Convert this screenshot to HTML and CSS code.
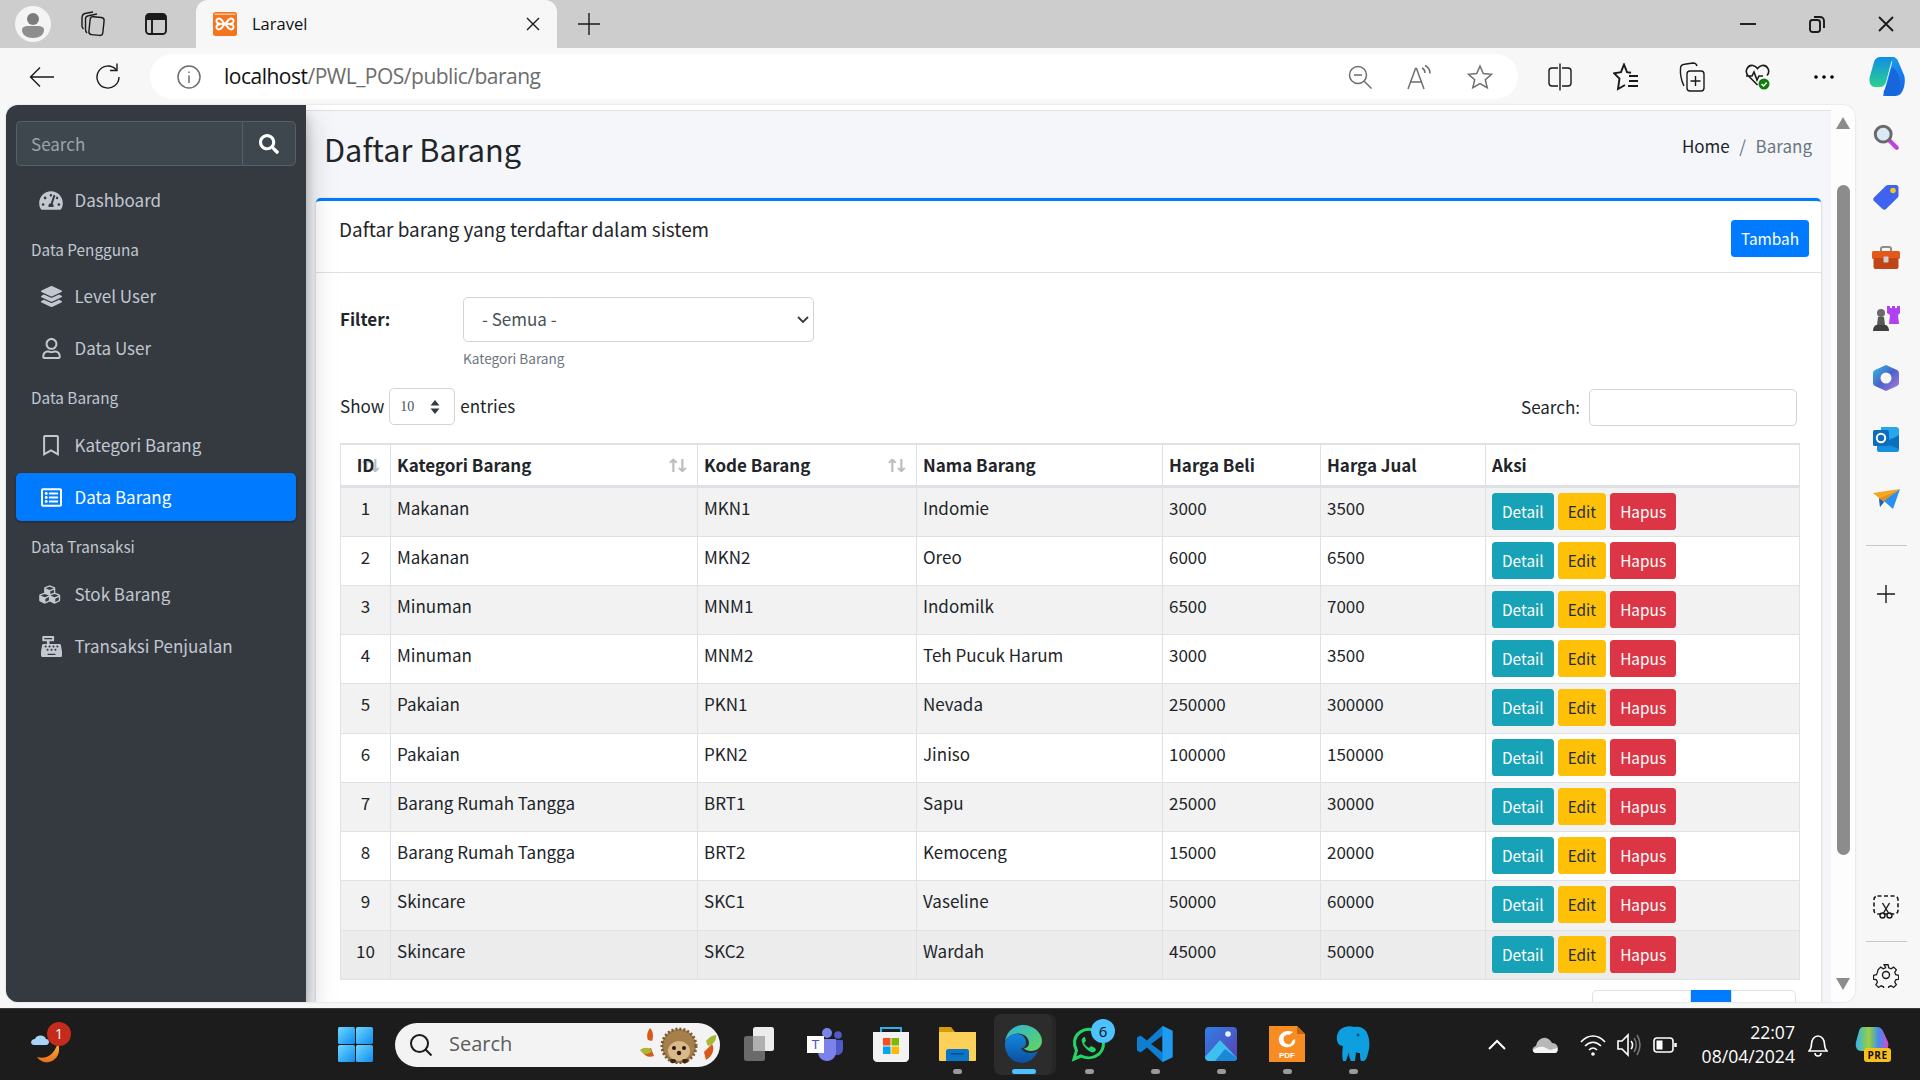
FILE: index.html
```html
<!DOCTYPE html>
<html lang="id">
<head>
<meta charset="utf-8">
<title>Laravel</title>
<link rel="stylesheet" href="styles.css">
</head>
<body>
<svg class="defs" width="0" height="0" aria-hidden="true">
  <defs>
    <symbol id="fa-search" viewBox="0 0 512 512"><path d="M505 442.7L405.3 343c-4.5-4.5-10.6-7-17-7H372c27.6-35.3 44-79.7 44-128C416 93.1 322.9 0 208 0S0 93.1 0 208s93.1 208 208 208c48.3 0 92.7-16.4 128-44v16.3c0 6.4 2.5 12.5 7 17l99.7 99.7c9.4 9.4 24.6 9.4 33.9 0l28.3-28.3c9.4-9.4 9.4-24.6.1-34zM208 336c-70.7 0-128-57.2-128-128 0-70.7 57.2-128 128-128 70.7 0 128 57.2 128 128 0 70.7-57.2 128-128 128z"/></symbol>
    <symbol id="fa-gauge" viewBox="0 0 576 512"><path d="M288 32C128.94 32 0 160.94 0 320c0 52.8 14.25 102.26 39.06 144.8 5.61 9.62 16.3 15.2 27.44 15.2h443c11.14 0 21.83-5.58 27.44-15.2C561.75 422.26 576 372.8 576 320c0-159.06-128.94-288-288-288zm0 64c14.71 0 26.58 10.13 30.32 23.65-1.11 2.26-2.64 4.23-3.45 6.67l-9.22 27.67c-5.13 3.49-10.97 6.01-17.64 6.01-17.67 0-32-14.33-32-32S270.33 96 288 96zM96 384c-17.67 0-32-14.33-32-32s14.33-32 32-32 32 14.33 32 32-14.33 32-32 32zm48-160c-17.67 0-32-14.33-32-32s14.33-32 32-32 32 14.33 32 32-14.33 32-32 32zm246.77-72.41l-61.33 184C343.13 347.33 352 364.54 352 384c0 11.72-3.38 22.55-8.88 32H232.88c-5.5-9.45-8.88-20.28-8.88-32 0-33.94 26.5-61.43 59.9-63.59l61.34-184.01c4.17-12.56 17.73-19.45 30.36-15.17 12.57 4.19 19.35 17.79 15.17 30.36zm14.66 57.2l15.52-46.55c3.47-1.29 7.13-2.23 11.05-2.23 17.67 0 32 14.33 32 32s-14.33 32-32 32c-11.38-.01-20.89-6.28-26.57-15.22zM480 384c-17.67 0-32-14.33-32-32s14.33-32 32-32 32 14.33 32 32-14.33 32-32 32z"/></symbol>
    <symbol id="fa-layers" viewBox="0 0 512 512"><path d="M12.41 148.02l232.94 105.67c6.8 3.09 14.49 3.09 21.29 0l232.94-105.67c16.55-7.51 16.55-32.52 0-40.03L266.65 2.31a25.607 25.607 0 0 0-21.29 0L12.41 107.98c-16.55 7.51-16.55 32.53 0 40.04zm487.18 88.28l-58.09-26.33-161.64 73.27c-7.56 3.43-15.59 5.17-23.86 5.17s-16.29-1.74-23.86-5.17L70.51 209.97l-58.1 26.33c-16.55 7.5-16.55 32.5 0 40l232.94 105.59c6.8 3.08 14.49 3.08 21.29 0L499.59 276.3c16.55-7.5 16.55-32.5 0-40zm0 127.8l-57.87-26.23-161.86 73.37c-7.56 3.43-15.59 5.17-23.86 5.17s-16.29-1.74-23.86-5.17L70.29 337.87 12.41 364.1c-16.55 7.5-16.55 32.5 0 40l232.94 105.59c6.8 3.08 14.49 3.08 21.29 0L499.59 404.1c16.55-7.5 16.55-32.5 0-40z"/></symbol>
    <symbol id="fa-user" viewBox="0 0 448 512"><path d="M313.6 304c-28.7 0-42.5 16-89.6 16-47.1 0-60.8-16-89.6-16C60.2 304 0 364.2 0 438.4V464c0 26.5 21.5 48 48 48h352c26.5 0 48-21.5 48-48v-25.6c0-74.2-60.2-134.4-134.4-134.4zM400 464H48v-25.6c0-47.6 38.8-86.4 86.4-86.4 14.6 0 38.3 16 89.6 16 51.7 0 74.9-16 89.6-16 47.6 0 86.4 38.8 86.4 86.4V464zM224 288c79.5 0 144-64.5 144-144S303.5 0 224 0 80 64.5 80 144s64.5 144 144 144zm0-240c52.9 0 96 43.1 96 96s-43.1 96-96 96-96-43.1-96-96 43.1-96 96-96z"/></symbol>
    <symbol id="fa-bookmark" viewBox="0 0 384 512"><path d="M336 0H48C21.49 0 0 21.49 0 48v464l192-112 192 112V48c0-26.51-21.49-48-48-48zm0 428.43l-144-84-144 84V54a6 6 0 0 1 6-6h276c3.31 0 6 2.69 6 5.99V428.43z"/></symbol>
    <symbol id="fa-list" viewBox="0 0 512 512"><path d="M464 32H48C21.49 32 0 53.49 0 80v352c0 26.51 21.49 48 48 48h416c26.51 0 48-21.49 48-48V80c0-26.51-21.49-48-48-48zm-6 400H54a6 6 0 0 1-6-6V86a6 6 0 0 1 6-6h404a6 6 0 0 1 6 6v340a6 6 0 0 1-6 6zm-42-92v24c0 6.627-5.373 12-12 12H204c-6.627 0-12-5.373-12-12v-24c0-6.627 5.373-12 12-12h200c6.627 0 12 5.373 12 12zm0-96v24c0 6.627-5.373 12-12 12H204c-6.627 0-12-5.373-12-12v-24c0-6.627 5.373-12 12-12h200c6.627 0 12 5.373 12 12zm0-96v24c0 6.627-5.373 12-12 12H204c-6.627 0-12-5.373-12-12v-24c0-6.627 5.373-12 12-12h200c6.627 0 12 5.373 12 12zm-252 12c0 19.882-16.118 36-36 36s-36-16.118-36-36 16.118-36 36-36 36 16.118 36 36zm0 96c0 19.882-16.118 36-36 36s-36-16.118-36-36 16.118-36 36-36 36 16.118 36 36zm0 96c0 19.882-16.118 36-36 36s-36-16.118-36-36 16.118-36 36-36 36 16.118 36 36z"/></symbol>
    <symbol id="fa-cubes" viewBox="0 0 576 512"><path d="M488.6 250.2L392 214V105.5c0-15-9.3-28.4-23.4-33.7l-100-37.5c-8.1-3.1-17.1-3.1-25.3 0l-100 37.5c-14.1 5.3-23.4 18.7-23.4 33.7V214l-96.6 36.2C9.3 255.5 0 268.9 0 283.9V394c0 13.6 7.7 26.1 19.9 32.2l100 50c10.1 5.1 22.1 5.1 32.2 0l103.9-52 103.9 52c10.1 5.1 22.1 5.1 32.2 0l100-50c12.2-6.1 19.9-18.6 19.9-32.2V283.9c0-15-9.3-28.4-23.4-33.7zM358 214.8l-85 31.9v-68.2l85-37v73.3zM154 104.1l102-38.2 102 38.2v.6l-102 41.4-102-41.4v-.6zm84 291.1l-85 42.5v-79.1l85-38.8v75.4zm0-112l-102 41.4-102-41.4v-.6l102-38.2 102 38.2v.6zm240 112l-85 42.5v-79.1l85-38.8v75.4zm0-112l-102 41.4-102-41.4v-.6l102-38.2 102 38.2v.6z"/></symbol>
    <symbol id="fa-register" viewBox="0 0 512 512"><path d="M511.1 378.8l-26.7-160c-2.6-15.4-15.9-26.7-31.6-26.7H208v-64h96c8.8 0 16-7.2 16-16V16c0-8.8-7.2-16-16-16H48c-8.8 0-16 7.2-16 16v96c0 8.8 7.2 16 16 16h96v64H59.1c-15.6 0-29 11.3-31.6 26.7L.8 378.7c-.6 3.5-.9 7-.9 10.5V480c0 17.7 14.3 32 32 32h448c17.7 0 32-14.3 32-32v-90.7c.1-3.5-.2-7-.8-10.5zM280 248c0-8.8 7.2-16 16-16h16c8.8 0 16 7.2 16 16v16c0 8.8-7.2 16-16 16h-16c-8.8 0-16-7.2-16-16v-16zm-32 64h16c8.8 0 16 7.2 16 16v16c0 8.8-7.2 16-16 16h-16c-8.8 0-16-7.2-16-16v-16c0-8.8 7.2-16 16-16zm-32-80c8.8 0 16 7.2 16 16v16c0 8.8-7.2 16-16 16h-16c-8.8 0-16-7.2-16-16v-16c0-8.8 7.2-16 16-16h16zM80 80V48h192v32H80zm40 200h-16c-8.8 0-16-7.2-16-16v-16c0-8.8 7.2-16 16-16h16c8.8 0 16 7.2 16 16v16c0 8.8-7.2 16-16 16zm16 64v-16c0-8.8 7.2-16 16-16h16c8.8 0 16 7.2 16 16v16c0 8.8-7.2 16-16 16h-16c-8.8 0-16-7.2-16-16zm216 112c0 4.4-3.6 8-8 8H168c-4.4 0-8-3.6-8-8v-16c0-4.4 3.6-8 8-8h176c4.4 0 8 3.6 8 8v16zm24-112c0 8.8-7.2 16-16 16h-16c-8.8 0-16-7.2-16-16v-16c0-8.8 7.2-16 16-16h16c8.8 0 16 7.2 16 16v16zm48-80c0 8.8-7.2 16-16 16h-16c-8.8 0-16-7.2-16-16v-16c0-8.8 7.2-16 16-16h16c8.8 0 16 7.2 16 16v16z"/></symbol>
    <linearGradient id="g-copilot" x1="0" y1="0" x2="1" y2="1"><stop offset="0" stop-color="#18b8d8"/><stop offset=".5" stop-color="#1a86f0"/><stop offset="1" stop-color="#1b5fe0"/></linearGradient>
    <linearGradient id="g-copilot2" x1="0" y1="0" x2="0" y2="1"><stop offset="0" stop-color="#0e8fe8"/><stop offset="1" stop-color="#2ed08c"/></linearGradient>
    <linearGradient id="g-win" x1="0" y1="0" x2="1" y2="1"><stop offset="0" stop-color="#6fd8ff"/><stop offset="1" stop-color="#0d8cf0"/></linearGradient>
    <linearGradient id="g-edge" x1="0" y1="0" x2="1" y2="1"><stop offset="0" stop-color="#2ab5d8"/><stop offset="1" stop-color="#66d45c"/></linearGradient>
    <linearGradient id="g-edge2" x1="0" y1="0" x2="0" y2="1"><stop offset="0" stop-color="#1487e0"/><stop offset="1" stop-color="#0b4f9e"/></linearGradient>
    <linearGradient id="g-photo" x1="0" y1="0" x2="1" y2="1"><stop offset="0" stop-color="#2f80e8"/><stop offset="1" stop-color="#5b3fb0"/></linearGradient>
    <linearGradient id="g-sun" x1="0" y1="0" x2="0" y2="1"><stop offset="0" stop-color="#f9b53a"/><stop offset="1" stop-color="#ea6f1d"/></linearGradient>
    <linearGradient id="g-m365" x1="0" y1="0" x2="1" y2="1"><stop offset="0" stop-color="#2fc0e8"/><stop offset=".5" stop-color="#4b63c8"/><stop offset="1" stop-color="#b07ae0"/></linearGradient>
    <linearGradient id="g-pre" x1="0" y1="0" x2="1" y2="0"><stop offset="0" stop-color="#2fb4f0"/><stop offset=".4" stop-color="#9bd03c"/><stop offset=".7" stop-color="#3f8cf0"/><stop offset="1" stop-color="#d84ad0"/></linearGradient>
  </defs>
</svg>

<header class="tabbar">
  <div class="slot profile-slot">
    <svg width="36" height="36" viewBox="0 0 36 36"><circle cx="18" cy="18" r="18" fill="#f4f4f4"/><circle cx="18" cy="13" r="6" fill="#7c7c7c"/><path d="M7 24c0-3 3-4 6-4h10c3 0 6 1 6 4 0 5-5 8-11 8S7 29 7 24z" fill="#8e8e8e"/></svg>
  </div>
  <div class="slot">
    <svg class="line" width="26" height="26" viewBox="0 0 26 26"><rect x="9.5" y="6" width="14" height="18" rx="3" transform="rotate(6 16 15)"/><path d="M7 22c-1-1-1.500-2-1.500-3.500V8c0-2 1-3 3-3.300L17 3M3.500 18c-1-1-1.500-2-1.500-3V7c0-3 2-4.500 4-4.700L13 1"/></svg>
  </div>
  <div class="slot slot-wide">
    <svg class="line strong" width="24" height="24" viewBox="0 0 24 24"><rect x="2" y="2" width="20" height="20" rx="3.500"/><path d="M8 8v14"/><path d="M2 5.500C2 3 3 2 5.500 2h13C21 2 22 3 22 5.500V8H2z" class="fill-k"/></svg>
  </div>
  <div class="tab">
    <svg class="favicon" width="24" height="24" viewBox="0 0 24 24"><rect width="24" height="24" rx="2.500" fill="#f4751f"/><rect x="1.500" y="1.500" width="21" height="1.500" fill="#fbc39a"/><path d="M8 7.500c-2.500-2-5-.2-4.500 2 .4 1.600 3 2.500 5 2.500h7c2 0 4.600-.9 5-2.500.5-2.200-2-4-4.500-2-1.500 1.200-2 3-4 4.500-2-1.500-2.500-3.300-4-4.500zM8 16.500c-2.500 2-5 .2-4.500-2 .4-1.600 3-2.500 5-2.500h7c2 0 4.600.9 5 2.500.5 2.200-2 4-4.500 2-1.500-1.200-2-3-4-4.500-2 1.500-2.500 3.300-4 4.500z" fill="none" stroke="#fff" stroke-width="2"/></svg>
    <span class="tab-title">Laravel</span>
    <svg class="line tab-close" width="14" height="14" viewBox="0 0 14 14"><path d="M1 1l12 12M13 1L1 13"/></svg>
  </div>
  <div class="slot slot-plus">
    <svg class="line" width="22" height="22" viewBox="0 0 22 22"><path d="M11 0v22M0 11h22"/></svg>
  </div>
  <div class="window-buttons">
    <div class="slot slot-win"><svg class="line strong" width="16" height="2" viewBox="0 0 16 2"><path d="M0 1h16"/></svg></div>
    <div class="slot slot-win"><svg class="line strong" width="16" height="18" viewBox="0 0 16 18"><rect x="1" y="5" width="10" height="12" rx="2.500"/><path d="M5 2h6c2.500 0 4 1.500 4 4v7"/></svg></div>
    <div class="slot slot-win"><svg class="line strong" width="16" height="16" viewBox="0 0 16 16"><path d="M1 1l14 14M15 1L1 15"/></svg></div>
  </div>
</header>

<nav class="toolbar">
  <div class="slot tool"><svg class="line" width="26" height="22" viewBox="0 0 26 22"><path d="M25 11H2M11 1.500L1.500 11l9.500 9.500"/></svg></div>
  <div class="slot tool"><svg class="line" width="24" height="28" viewBox="0 0 24 28"><path d="M20 6.500A11 11 0 1 0 23 14M21 .5v7h-7"/></svg></div>
  <div class="address">
    <div class="slot addr-info"><svg class="line grey" width="24" height="24" viewBox="0 0 24 24"><circle cx="12" cy="12" r="11"/><path d="M12 10.500V18M12 6.500v1.500"/></svg></div>
    <div class="url"><span class="url-host">localhost</span><span class="url-path">/PWL_POS/public/barang</span></div>
    <div class="addr-tools">
      <div class="slot addr-tool"><svg class="line grey" width="24" height="24" viewBox="0 0 24 24"><circle cx="10" cy="10" r="8.500"/><path d="M6 10h8M16 16l7.500 7.500"/></svg></div>
      <div class="slot addr-tool"><svg class="line grey" width="26" height="26" viewBox="0 0 26 26"><path d="M1 25L8.500 4.500h1L17 25M4 18h11M15 4c2 1 3 2.500 3 5M18 1.500c3 1.500 5 4 5 8"/></svg></div>
      <div class="slot addr-tool"><svg class="line grey" width="26" height="26" viewBox="0 0 26 26"><path d="M13 2l3.300 7.500 8.200.8-6.200 5.400 1.900 8L13 19.500l-7.200 4.200 1.900-8-6.200-5.400 8.200-.8z"/></svg></div>
    </div>
  </div>
  <div class="tool-group">
    <div class="slot tool"><svg class="line" width="24" height="28" viewBox="0 0 24 28"><path d="M10 5H4c-2 0-3 1-3 3v12c0 2 1 3 3 3h6M14 5h6c2 0 3 1 3 3v12c0 2-1 3-3 3h-6M12 .5v27"/></svg></div>
    <div class="slot tool"><svg class="line strong" width="26" height="28" viewBox="0 0 26 28"><path d="M18 9.800l-4-.6L11 1.500 8 9.200l-7 1 5.500 5.300L5 26l7-4"/><path d="M16 13h9M16 18h9M15 23h10"/></svg></div>
    <div class="slot tool"><svg class="line" width="26" height="30" viewBox="0 0 26 30"><rect x="8" y="9" width="17" height="20" rx="3"/><path d="M16.500 14v10M11.500 19h10M5 24C2.500 19 1 13 1.500 6c.2-2 2-3.500 4-3.700L14 1c2 0 3.500 1 4 3"/></svg></div>
    <div class="slot tool"><svg width="26" height="28" viewBox="0 0 26 28"><path class="line-p" d="M12.500 22L3 12.500C-1 8 3 1.500 8 2.500c2 .4 3.500 1.500 4.500 3 1-1.500 2.500-2.600 4.500-3 5-1 9 5.500 5 10M1 13h6l2-4 3 8 2-4h4"/><circle cx="19" cy="21" r="5.500" fill="#107c10"/><path d="M16.500 21l2 2 3.200-3.500" fill="none" stroke="#fff" stroke-width="1.500"/></svg></div>
    <div class="slot tool"><svg width="20" height="4" viewBox="0 0 20 4"><circle cx="2" cy="2" r="1.800"/><circle cx="10" cy="2" r="1.800"/><circle cx="18" cy="2" r="1.800"/></svg></div>
  </div>
  <div class="slot copilot-slot">
    <svg width="36" height="39" viewBox="0 0 36 39"><path d="M12 0h11c3 0 5 1.500 6 4l6 14c1.500 4 1 12-2 17-1.500 2.500-4 4-7 4H14l9-33c.5-2-1-3-3-1z" fill="url(#g-copilot)"/><path d="M12 0C8 0 6 2 5 5L1 19c-1.500 5 0 11 5 11h5c3 0 5-2 6-5l5-19c.5-3 2-5 4-6z" fill="url(#g-copilot2)"/><path d="M22 12c-2 8-3 15-7 22-1 2 0 5 3 5h6c3 0 5-2 6-5 2-6 1-12-1-17-1-3-6-9-7-5z" fill="#1766dc"/></svg>
  </div>
</nav>

<div class="workspace">
  <div class="view">
    <aside class="sidebar">
      <form class="side-search">
        <input class="side-search-input" type="text" placeholder="Search">
        <span class="side-search-btn"><svg class="fa" width="20" height="20"><use href="#fa-search"/></svg></span>
      </form>
      <ul class="nav">
        <li class="nav-link"><span class="nav-icon"><svg class="fa" width="24" height="21"><use href="#fa-gauge"/></svg></span>Dashboard</li>
        <li class="nav-head">Data Pengguna</li>
        <li class="nav-link"><span class="nav-icon"><svg class="fa" width="21" height="21"><use href="#fa-layers"/></svg></span>Level User</li>
        <li class="nav-link"><span class="nav-icon"><svg class="fa" width="19" height="21"><use href="#fa-user"/></svg></span>Data User</li>
        <li class="nav-head">Data Barang</li>
        <li class="nav-link"><span class="nav-icon"><svg class="fa" width="16" height="21"><use href="#fa-bookmark"/></svg></span>Kategori Barang</li>
        <li class="nav-link active"><span class="nav-icon"><svg class="fa" width="21" height="21"><use href="#fa-list"/></svg></span>Data Barang</li>
        <li class="nav-head">Data Transaksi</li>
        <li class="nav-link"><span class="nav-icon"><svg class="fa" width="24" height="21"><use href="#fa-cubes"/></svg></span>Stok Barang</li>
        <li class="nav-link"><span class="nav-icon"><svg class="fa" width="21" height="21"><use href="#fa-register"/></svg></span>Transaksi Penjualan</li>
      </ul>
    </aside>

    <main class="main">
      <div class="topstrip"></div>
      <div class="pagehead">
        <h1 class="page-title">Daftar Barang</h1>
        <ol class="crumbs">
          <li class="crumb-link">Home</li>
          <li class="crumb-sep">/</li>
          <li class="crumb-now">Barang</li>
        </ol>
      </div>
      <section class="card">
        <div class="card-head">
          <h3 class="card-title">Daftar barang yang terdaftar dalam sistem</h3>
          <a class="btn btn-primary">Tambah</a>
        </div>
        <div class="card-body">
          <div class="filter">
            <label class="filter-label">Filter:</label>
            <div class="filter-control">
              <span class="select-box">
                <select class="form-select"><option>- Semua -</option></select>
                <svg class="select-chevron" width="12" height="7" viewBox="0 0 12 7"><path d="M1 1l5 5 5-5"/></svg>
              </span>
              <small class="hint">Kategori Barang</small>
            </div>
          </div>
          <div class="dt-top">
            <div class="dt-length">
              <span>Show</span>
              <span class="len-box"><select class="len-select"><option>10</option></select>
                <svg class="len-caret" width="10" height="14" viewBox="0 0 10 14"><path d="M5 0l4.500 5.500h-9zM5 14L.5 8.500h9z"/></svg></span>
              <span>entries</span>
            </div>
            <label class="dt-search">Search:<input class="dt-input" type="search"></label>
          </div>
          <table class="table">
            <colgroup><col class="c1"><col class="c2"><col class="c3"><col class="c4"><col class="c5"><col class="c6"><col class="c7"></colgroup>
            <thead>
              <tr><th class="center sort">ID</th><th class="sort">Kategori Barang</th><th class="sort">Kode Barang</th><th>Nama Barang</th><th>Harga Beli</th><th>Harga Jual</th><th>Aksi</th></tr>
            </thead>
            <tbody>
              <tr><td class="center">1</td><td>Makanan</td><td>MKN1</td><td>Indomie</td><td>3000</td><td>3500</td><td class="acts"><a class="btn btn-info">Detail</a><a class="btn btn-warning">Edit</a><a class="btn btn-danger">Hapus</a></td></tr>
              <tr><td class="center">2</td><td>Makanan</td><td>MKN2</td><td>Oreo</td><td>6000</td><td>6500</td><td class="acts"><a class="btn btn-info">Detail</a><a class="btn btn-warning">Edit</a><a class="btn btn-danger">Hapus</a></td></tr>
              <tr><td class="center">3</td><td>Minuman</td><td>MNM1</td><td>Indomilk</td><td>6500</td><td>7000</td><td class="acts"><a class="btn btn-info">Detail</a><a class="btn btn-warning">Edit</a><a class="btn btn-danger">Hapus</a></td></tr>
              <tr><td class="center">4</td><td>Minuman</td><td>MNM2</td><td>Teh Pucuk Harum</td><td>3000</td><td>3500</td><td class="acts"><a class="btn btn-info">Detail</a><a class="btn btn-warning">Edit</a><a class="btn btn-danger">Hapus</a></td></tr>
              <tr><td class="center">5</td><td>Pakaian</td><td>PKN1</td><td>Nevada</td><td>250000</td><td>300000</td><td class="acts"><a class="btn btn-info">Detail</a><a class="btn btn-warning">Edit</a><a class="btn btn-danger">Hapus</a></td></tr>
              <tr><td class="center">6</td><td>Pakaian</td><td>PKN2</td><td>Jiniso</td><td>100000</td><td>150000</td><td class="acts"><a class="btn btn-info">Detail</a><a class="btn btn-warning">Edit</a><a class="btn btn-danger">Hapus</a></td></tr>
              <tr><td class="center">7</td><td>Barang Rumah Tangga</td><td>BRT1</td><td>Sapu</td><td>25000</td><td>30000</td><td class="acts"><a class="btn btn-info">Detail</a><a class="btn btn-warning">Edit</a><a class="btn btn-danger">Hapus</a></td></tr>
              <tr><td class="center">8</td><td>Barang Rumah Tangga</td><td>BRT2</td><td>Kemoceng</td><td>15000</td><td>20000</td><td class="acts"><a class="btn btn-info">Detail</a><a class="btn btn-warning">Edit</a><a class="btn btn-danger">Hapus</a></td></tr>
              <tr><td class="center">9</td><td>Skincare</td><td>SKC1</td><td>Vaseline</td><td>50000</td><td>60000</td><td class="acts"><a class="btn btn-info">Detail</a><a class="btn btn-warning">Edit</a><a class="btn btn-danger">Hapus</a></td></tr>
              <tr class="hover"><td class="center">10</td><td>Skincare</td><td>SKC2</td><td>Wardah</td><td>45000</td><td>50000</td><td class="acts"><a class="btn btn-info">Detail</a><a class="btn btn-warning">Edit</a><a class="btn btn-danger">Hapus</a></td></tr>
            </tbody>
          </table>
          <ul class="pager">
            <li class="page-item page-prev">Previous</li>
            <li class="page-item page-on">1</li>
            <li class="page-item page-next">Next</li>
          </ul>
        </div>
      </section>
    </main>

    <div class="scrollbar">
      <svg class="sb-arrow" width="14" height="12" viewBox="0 0 14 12"><path d="M7 0l7 12H0z"/></svg>
      <div class="sb-thumb"></div>
      <svg class="sb-arrow sb-down" width="14" height="12" viewBox="0 0 14 12"><path d="M7 12L0 0h14z"/></svg>
    </div>
  </div>

  <aside class="rail">
    <div class="rail-slot"><svg width="26" height="26" viewBox="0 0 28 28"><path d="M18 18l7.500 7.500" stroke="#c23fe0" stroke-width="4.500" stroke-linecap="round"/><circle cx="11" cy="11" r="8.500" fill="#dbe9f6" stroke="#6a6a6a" stroke-width="3.200"/></svg></div>
    <div class="rail-slot"><svg width="26" height="26" viewBox="0 0 26 26"><path d="M15 1h8c1.500 0 2.500 1 2.500 2.500v8c0 1-.5 1.500-1 2.200L13 25c-1 1-2.500 1-3.500 0L1 17c-1-1-1-2.500 0-3.500L13 1.700c.5-.4 1.200-.7 2-.7z" fill="#3f63ee"/><circle cx="20" cy="6.500" r="2.800" fill="#f3c623"/></svg></div>
    <div class="rail-slot"><svg width="28" height="24" viewBox="0 0 28 24"><path d="M9 6V3c0-1.200.8-2 2-2h6c1.200 0 2 .8 2 2v3" fill="none" stroke="#8d8d8d" stroke-width="2"/><rect y="5" width="28" height="8" rx="1.500" fill="#e2591c"/><rect x="1.500" y="12" width="25" height="11" rx="2" fill="#bf4416"/><rect x="11.500" y="10.500" width="5" height="6" rx="1" fill="#cfcfcf"/></svg></div>
    <div class="rail-slot"><svg width="28" height="28" viewBox="0 0 28 28"><path d="M15 2h3v2h2V2h3v2h2V2h3v7l-2 2 1 9h-10l1-9-3-2z" fill="#b23ff0"/><circle cx="9" cy="9" r="4" fill="#6a6a6a"/><path d="M6 13h6l1 8H5z" fill="#585858"/><path d="M1 27c0-3 1-5 3-6h10c2 1 3 3 3 6z" fill="#3f3f3f"/></svg></div>
    <div class="rail-slot"><svg width="26" height="28" viewBox="0 0 26 28"><path d="M13 1l11 5c1 .5 2 1.500 2 3v10c0 1.500-1 2.500-2 3l-11 5L2 22c-1-.5-2-1.500-2-3V9c0-1.500 1-2.500 2-3z" fill="url(#g-m365)"/><circle cx="13" cy="14" r="5.500" fill="#f7f7f7"/></svg></div>
    <div class="rail-slot"><svg width="26" height="26" viewBox="0 0 26 26"><path d="M8 1h15c1.500 0 3 1 3 2.500V12L8 14z" fill="#28a8ea"/><path d="M4 12h22v12c0 1-1 2-2 2H6c-1 0-2-1-2-2z" fill="#1490df"/><path d="M12 17l14-8v14z" fill="#0b6fbd"/><rect y="4" width="16" height="16" rx="1.500" fill="#0f6cbd"/><circle cx="8" cy="12" r="4.200" fill="none" stroke="#fff" stroke-width="2"/></svg></div>
    <div class="rail-slot"><svg width="27" height="20" viewBox="0 0 27 20"><path d="M27 0L0 4l6 5z" fill="#f2a81d"/><path d="M27 0L6 9l1 9 4-5z" fill="#e8911a"/><path d="M27 0L11 12l9 8z" fill="#2a8ff0"/><path d="M6 9l1 9 4-5z" fill="#1664c8"/></svg></div>
    <div class="rail-rule"></div>
    <div class="rail-slot rail-plus"><svg class="line" width="18" height="18" viewBox="0 0 18 18"><path d="M9 0v18M0 9h18"/></svg></div>
    <div class="rail-slot rail-low"><svg class="line" width="26" height="24" viewBox="0 0 26 24"><rect x="1" y="1" width="24" height="18" rx="3.500" stroke-dasharray="4 2.500" stroke-width="1.600"/><circle cx="9.500" cy="20.500" r="2.500"/><circle cx="16.500" cy="20.500" r="2.500"/><path d="M10.500 18L16.500 8M15.500 18L9.500 8"/></svg></div>
    <div class="rail-rule rail-rule-low"></div>
    <div class="rail-slot"><svg class="line" width="26" height="26" viewBox="0 0 26 26"><circle cx="13" cy="13" r="3.500"/><path d="M10.800 1.500h4.400l.7 3.300 2.600 1.100 2.900-1.800 3 3-1.800 2.900 1.100 2.600 3.300.7v.4h0v3.800l-3.300.7-1.100 2.600 1.800 2.900-3 3-2.900-1.800-2.600 1.100-.7 3.300h-4.400l-.7-3.300-2.600-1.100-2.900 1.800-3-3 1.800-2.900-1.100-2.600-3.300-.7v-4.200l3.300-.7 1.100-2.600L4 7.100l3-3 2.900 1.800 2.600-1.100z" transform="translate(1.400 1.400) scale(.9)"/></svg></div>
  </aside>
</div>

<footer class="taskbar">
  <div class="weather">
    <svg width="36" height="40" viewBox="0 0 36 40"><path d="M24 14c3 8 0 17-9 19-5 1-9-1-12-5 8 2 16 0 21-14z" fill="url(#g-sun)" transform="translate(4 4)"/><path d="M4 20c-4 0-4-6 1-6 1-4 9-5 11 0 4 0 4 6 0 6z" fill="#a8d4f8"/></svg>
    <span class="weather-badge">1</span>
  </div>
  <div class="start">
    <svg width="35" height="35" viewBox="0 0 35 35"><rect width="17" height="17" rx="1.500" fill="url(#g-win)"/><rect x="18" width="17" height="17" rx="1.500" fill="url(#g-win)"/><rect y="18" width="17" height="17" rx="1.500" fill="url(#g-win)"/><rect x="18" y="18" width="17" height="17" rx="1.500" fill="url(#g-win)"/></svg>
  </div>
  <div class="pill">
    <svg class="line" width="24" height="24" viewBox="0 0 24 24"><circle cx="10.500" cy="10.500" r="8.500" stroke-width="2"/><path d="M16.500 16.500l6 6" stroke-width="2"/></svg>
    <span class="pill-text">Search</span>
    <svg class="hedgehog" width="78" height="38" viewBox="0 0 78 38"><path d="M8 14c-2-5 0-9 2-12 3 3 4 8 2 13zM2 25l9-3 3 8c-5 2-10 0-12-5zM64 26l8-8c3 4 1 12-6 16z" fill="#d85a1a"/><path d="M0 24c4-3 9-3 12 1-3 4-9 4-12-1zM66 15c3-4 7-6 10-6 1 5-3 10-8 11z" fill="#a8b832"/><circle cx="39" cy="20" r="17" fill="#a57f4c" stroke="#7a5a30" stroke-width="3" stroke-dasharray="2 2"/><ellipse cx="39" cy="25" rx="11" ry="10" fill="#d9b98a"/><circle cx="34" cy="22" r="2" fill="#2a1a10"/><circle cx="44" cy="22" r="2" fill="#2a1a10"/><circle cx="39" cy="27" r="2.200" fill="#2a1a10"/><rect x="30" y="33" width="6" height="4" rx="2" fill="#3a2414"/><rect x="42" y="33" width="6" height="4" rx="2" fill="#3a2414"/></svg>
  </div>
  <div class="apps">
    <div class="app">
      <svg width="30" height="34" viewBox="0 0 30 34"><rect x="9" y="0" width="21" height="24" rx="2.500" fill="#ececec"/><rect y="9" width="21" height="25" rx="2.500" fill="#6a6a6a"/><rect x="9" y="9" width="12" height="15" fill="#b0b0b0"/></svg>
    </div>
    <div class="app">
      <svg width="36" height="34" viewBox="0 0 36 34"><circle cx="20" cy="6" r="5" fill="#7b83eb"/><circle cx="31" cy="8" r="3.800" fill="#5059c9"/><path d="M26 13h9c1 0 1 1 1 2v7c0 4-3 6-6 6h-4z" fill="#5059c9"/><path d="M11 12h18v13c0 5-4 9-9 9s-9-4-9-9z" fill="#7b83eb"/><rect y="9" width="17" height="17" fill="#fff"/><text x="8.500" y="22" class="teams-t">T</text></svg>
    </div>
    <div class="app">
      <svg width="36" height="36" viewBox="0 0 36 36"><path d="M8 8V2h20v6" fill="none" stroke="#2ab0ea" stroke-width="2"/><path d="M0 6h36v26c0 2-2 4-4 4H4c-2 0-4-2-4-4z" fill="#f2f2f2"/><rect x="10" y="12" width="7.500" height="7.500" fill="#f25022"/><rect x="18.500" y="12" width="7.500" height="7.500" fill="#7fba00"/><rect x="10" y="20.500" width="7.500" height="7.500" fill="#00a4ef"/><rect x="18.500" y="20.500" width="7.500" height="7.500" fill="#ffb900"/></svg>
    </div>
    <div class="app has-dot">
      <svg width="37" height="34" viewBox="0 0 37 34"><path d="M0 1c0-.5.500-1 1-1h11l4 5h-16z" fill="#d89c08"/><path d="M0 5h37v28c0 .5-.5 1-1 1H1c-.5 0-1-.5-1-1z" fill="#fcd15a"/><path d="M7 24c0-1 1-2 2-2h19c1 0 2 1 2 2v10H7z" fill="#0b75c8"/><rect x="12" y="26" width="13" height="1.500" fill="#044d8c"/></svg>
      <i class="dot"></i>
    </div>
    <div class="app app-active">
      <svg width="38" height="38" viewBox="0 0 38 38"><path d="M1 17C2 7 10 0 19 0c11 0 19 8 19 16 0 6-5 10-11 10-3 0-6-1-7-3 3 0 5-2 5-5 0-7-8-11-14-9C6 10 2 13 1 17z" fill="url(#g-edge)"/><path d="M1 17c2-5 7-8 12-8 6 0 9 4 9 9 0 3-2 5-5 5 1 3 5 5 10 5 3 0 5-1 7-2-3 7-9 12-16 12C8 38 0 29 1 17z" fill="url(#g-edge2)"/></svg>
      <i class="dot dot-on"></i>
    </div>
    <div class="app has-dot">
      <svg width="36" height="36" viewBox="0 0 36 36"><path d="M3 33l2.500-8.500C2 18 3 11 8 7c6-5 14-5 20 0 6 6 6 15 0 21-5 4-12 5-18 2z" fill="none" stroke="#25d366" stroke-width="3"/><path d="M13 11c-2 1-3 3-2 5 1 4 5 8 9 10 2 1 4 0 5-2l-1-2-4-2-2 2c-2-1-4-3-5-5l2-2-1-4z" fill="#25d366"/></svg>
      <span class="wa-badge">6</span>
      <i class="dot"></i>
    </div>
    <div class="app has-dot">
      <svg width="36" height="36" viewBox="0 0 36 36"><path d="M25.500 0l10 4.800v26.400l-10 4.800L10 21.500 3.500 26.500 0 24.500V11.500l3.500-2L10 14.500z M25.500 9.500L14 18l11.500 8.500z" fill="#0e7fd0" fill-rule="evenodd"/><path d="M25.500 0l10 4.800v26.400l-10 4.800z" fill="#1f9cf0"/></svg>
      <i class="dot"></i>
    </div>
    <div class="app has-dot">
      <svg width="32" height="34" viewBox="0 0 32 34"><rect width="32" height="34" rx="4" fill="url(#g-photo)"/><circle cx="23" cy="7" r="2.800" fill="#e8f2ff"/><path d="M0 30L15 13l17 18v0c0 2-2 3-4 3H4c-2 0-4-2-4-4z" fill="#3ec0ee"/><path d="M10 34l10-12 12 9c0 2-2 3-4 3z" fill="#1c86d8"/></svg>
      <i class="dot"></i>
    </div>
    <div class="app has-dot">
      <svg width="36" height="36" viewBox="0 0 36 36"><path d="M0 0h28l8 8v28H0z" fill="#f78c22"/><path d="M28 0l8 8h-8z" fill="#c9640f"/><path d="M18 5c-6 1-9 6-8 10 1 5 6 7 10 6 5-1 7-5 6-8l-3 2c0 3-3 4-5 3-3-1-4-4-3-7 1-2 4-3 5-2l4-3c-2-1-4-1-6-1z" fill="#fff"/><text x="18" y="32" class="pdf-t">PDF</text></svg>
      <i class="dot"></i>
    </div>
    <div class="app has-dot">
      <svg width="34" height="36" viewBox="0 0 34 36"><path d="M9 1c3-1 6-1 9 0 4-1 9 0 12 4 3 5 4 12 3 18-1 4-2 11-5 12h-3c-1-2-1-5-1-8-1 0-3 0-4-1l-1 9h-4c-2-3-2-6-2-9l-3 9H7C6 31 6 25 7 20 3 20 0 16 1 10 2 5 5 2 9 1z" fill="#0d9fe0"/><circle cx="22" cy="9" r="1.500" fill="#054f80"/></svg>
      <i class="dot"></i>
    </div>
  </div>
  <div class="tray">
    <div class="tray-slot"><svg class="line white" width="18" height="11" viewBox="0 0 18 11"><path d="M1 10l8-8 8 8" stroke-width="2"/></svg></div>
    <div class="tray-slot"><svg width="26" height="16" viewBox="0 0 26 16"><path d="M4 16C0 16-1 10 4 9c1-5 5-9 10-8 3 .5 5 3 6 5 4 0 6 3 6 6 0 2-1 4-3 4z" fill="#b8b8b8"/><path d="M4 16c-2 0-3-1-3-3 3-2 7-4 11-3l6 3 7-2c1 2 0 5-2 5z" fill="#f4f4f4"/></svg></div>
    <div class="tray-slot"><svg class="line white" width="26" height="22" viewBox="0 0 26 22"><path d="M1 8c7-8 17-8 24 0M5 12c5-5 11-5 16 0M9 16c2.500-2.500 5.500-2.500 8 0"/><circle cx="13" cy="20" r="1.800" fill="#fff" stroke="none"/></svg></div>
    <div class="tray-slot tray-vol"><svg class="line white" width="24" height="24" viewBox="0 0 24 24"><path d="M1 8h4l6-6v20l-6-6H1zM14 8c2 2 2 6 0 8"/><path d="M17 5c3 4 3 10 0 14M20 2c4 6 4 14 0 20" class="dim"/></svg></div>
    <div class="tray-slot"><svg class="line white" width="24" height="16" viewBox="0 0 24 16"><rect x="1" y="1" width="19" height="14" rx="3"/><rect x="3.500" y="3.500" width="6" height="9" fill="#fff" stroke="none"/><path d="M22.500 6v4" stroke-width="2.500"/></svg></div>
    <div class="clock"><span>22:07</span><span>08/04/2024</span></div>
    <div class="tray-bell"><svg class="line white" width="20" height="24" viewBox="0 0 20 24"><path d="M1 18c2-2 2.500-4 2.500-7 0-4 2.500-8 6.500-8s6.500 4 6.500 8c0 3 .5 5 2.500 7zM7 20c0 4 6 4 6 0"/></svg></div>
    <div class="tray-pre">
      <svg width="34" height="30" viewBox="0 0 34 30"><path d="M8 0h14c3 0 5 2 6 4l5 11c1 3 0 7-2 9H6C2 24 0 20 1 15L4 4c.5-2 2-4 4-4z" fill="url(#g-pre)"/></svg>
      <span class="pre-tag">PRE</span>
    </div>
  </div>
</footer>
</body>
</html>
```

FILE: styles.css
```css
* { box-sizing: border-box; }
html, body { margin: 0; padding: 0; }
body {
  width: 1920px;
  height: 1080px;
  overflow: hidden;
  display: flex;
  flex-direction: column;
  background: #f7f7f7;
  color: #212529;
  font-family: "Noto Sans CJK SC", "Noto Sans", sans-serif;
  font-size: 17px;
  line-height: 28.8px;
}
ul, ol { list-style: none; margin: 0; padding: 0; }
h1, h3 { margin: 0; font-weight: 400; }
.defs { position: absolute; }

/* shared line icons */
.line { fill: none; stroke: #1a1a1a; stroke-width: 1.4; }
.line.strong { stroke-width: 1.9; }
.line.grey { stroke: #6e6e6e; stroke-width: 1.5; }
.line.white { stroke: #fff; stroke-width: 1.6; }
.fill-k { fill: #1a1a1a; stroke: none; }
.line-p { fill: none; stroke: #1a1a1a; stroke-width: 1.6; }
.dim { opacity: .4; }
.slot { display: flex; align-items: center; justify-content: center; flex: none; height: 100%; }

/* tab strip */
.tabbar {
  height: 48px;
  flex: none;
  display: flex;
  padding-left: 3px;
  background: #cdcdcd;
}
.tabbar .slot { width: 60px; }
.tabbar .slot-wide { width: 66px; margin-right: 7px; }
.tabbar .slot-plus { width: 64px; }
.tabbar .slot-win { width: 69px; }
.tab {
  width: 361px;
  flex: none;
  display: flex;
  align-items: center;
  padding: 0 17px 0 17px;
  background: #f7f7f7;
  border-radius: 12px 12px 0 0;
}
.tab-title {
  margin-left: 15px;
  font-family: "Open Sans", sans-serif;
  font-size: 16.5px;
  color: #111;
}
.tab-close { margin-left: auto; }
.window-buttons { display: flex; margin-left: auto; padding-right: 0; }

/* toolbar */
.toolbar {
  height: 57px;
  flex: none;
  display: flex;
  padding: 6px 3px 6px 9px;
  background: #f7f7f7;
}
.tool { width: 66px; }
.tool-group { display: flex; margin-left: 9px; }
.copilot-slot { width: 60px; }
.address {
  width: 1368px;
  margin-left: 9px;
  flex: none;
  display: flex;
  align-items: center;
  padding: 0 8px 0 15px;
  background: #fff;
  border-radius: 23px;
}
.addr-info { width: 48px; }
.url {
  margin-left: 11px;
  font-family: "Open Sans", sans-serif;
  font-size: 21px;
  letter-spacing: -.5px;
}
.url-host { color: #111; }
.url-path { color: #6d6d6d; }
.addr-tools { display: flex; margin-left: auto; height: 100%; }
.addr-tool { width: 60px; }

/* web view */
.workspace { flex: 1; display: flex; padding: 0 0 0 6px; min-height: 0; }
.view {
  width: 1849px;
  height: 897px;
  flex: none;
  display: flex;
  overflow: hidden;
  background: #fff;
  border-radius: 12px;
  box-shadow: 0 0 2px rgba(0,0,0,.18);
}
.fa { fill: currentColor; display: block; }

/* sidebar */
.sidebar {
  width: 300px;
  flex: none;
  position: relative;
  z-index: 2;
  padding: 16px 10px 0;
  background: #343a40;
  color: #c2c7d0;
  box-shadow: 0 14px 28px rgba(0,0,0,.25), 0 10px 10px rgba(0,0,0,.22);
}
.side-search {
  display: flex;
  height: 45px;
  margin: 0 0 10px;
}
.side-search-input {
  width: 226px;
  height: 100%;
  padding: 0 14px;
  background: #3f474e;
  border: 1px solid #56606a;
  border-right: 0;
  border-radius: 4.8px 0 0 4.8px;
  color: #fff;
  font: inherit;
  outline: 0;
}
.side-search-input::placeholder { color: #9ba4ab; opacity: 1; }
.side-search-btn {
  width: 54px;
  display: flex;
  align-items: center;
  justify-content: center;
  background: #3f474e;
  border: 1px solid #56606a;
  border-radius: 0 4.8px 4.8px 0;
  color: #fff;
}
.nav-link {
  height: 48px;
  display: flex;
  align-items: center;
  margin-bottom: 4px;
  padding-left: 23px;
  border-radius: 4.8px;
}
.nav-link.active {
  background: #007bff;
  color: #fff;
  box-shadow: 0 1px 3px rgba(0,0,0,.12), 0 1px 2px rgba(0,0,0,.24);
}
.nav-icon { width: 24px; margin-right: 11.5px; display: flex; justify-content: center; flex: none; }
.nav-head {
  padding: 8.6px 15px 10.7px;
  font-size: 15.3px;
  line-height: 25.4px;
}

/* main column */
.main {
  width: 1525px;
  flex: none;
  overflow: hidden;
  background: #f4f6f9;
}
.topstrip { height: 6px; background: #fff; border-bottom: 1px solid #dee2e6; }
.pagehead {
  height: 87px;
  display: flex;
  justify-content: space-between;
  align-items: flex-start;
  padding: 17px 19px 0 18px;
}
.page-title { font-size: 30.7px; line-height: 41.5px; }
.crumbs { display: flex; margin-top: 4px; }
.crumb-link { color: #212529; }
.crumb-sep { color: #6c757d; padding: 0 9.6px; }
.crumb-now { color: #6c757d; }
.card {
  width: 1505px;
  margin-left: 10px;
  background: #fff;
  border-top: 3px solid #007bff;
  border-radius: 4.8px;
  box-shadow: 0 0 1px rgba(0,0,0,.125), 0 1px 3px rgba(0,0,0,.2);
}
.card-head {
  height: 72px;
  display: flex;
  justify-content: space-between;
  align-items: flex-start;
  padding: 14px 12px 0 23px;
  border-bottom: 1px solid #dfe1e4;
}
.card-title { font-size: 18.9px; line-height: 28.8px; }
.card-head .btn { margin-top: 5px; width: 78px; padding: 0; }
.card-body { padding: 24px 24px 0; }

.filter { display: flex; }
.filter-label { width: 123px; flex: none; font-weight: 700; line-height: 43px; }
.filter-control { display: flex; flex-direction: column; width: 351px; }
.select-box { position: relative; display: block; height: 45px; }
.form-select {
  appearance: none;
  display: block;
  height: 100%;
  width: 100%;
  padding: 0 18px;
  background-color: #fff;
  border: 1px solid #ced4da;
  border-radius: 4.8px;
  color: #495057;
  font: inherit;
  outline: 0;
}
.select-chevron { position: absolute; right: 5px; top: 19px; fill: none; stroke: #3a3a3a; stroke-width: 1.8; }
.hint { margin-top: 3px; font-size: 13.6px; line-height: 26px; color: #6c757d; }

.dt-top {
  display: flex;
  justify-content: space-between;
  align-items: center;
  height: 37px;
  margin-top: 18px;
}
.dt-length { display: flex; align-items: center; gap: 5px; margin-top: -3px; }
.len-box { position: relative; display: block; width: 66px; height: 37px; }
.len-select {
  appearance: none;
  display: block;
  width: 100%;
  height: 100%;
  padding: 0 0 0 10px;
  background: #fff;
  border: 1px solid #ced4da;
  border-radius: 4.8px;
  color: #495057;
  font-family: "Liberation Serif", serif;
  font-size: 14px;
  outline: 0;
}
.len-caret { position: absolute; right: 15px; top: 12px; fill: #343a40; }
.dt-search { display: flex; align-items: center; gap: 9px; }
.dt-input {
  width: 208px;
  height: 37px;
  background: #fff;
  border: 1px solid #ced4da;
  border-radius: 4.8px;
  outline: 0;
}

/* table */
.table {
  width: 1459px;
  margin-top: 17px;
  table-layout: fixed;
  border-collapse: collapse;
  border-top: 2px solid #dee2e6;
  border-left: 1px solid #dee2e6;
  border-right: 1px solid #dee2e6;
}
.c1 { width: 50px; }
.c2 { width: 307px; }
.c3 { width: 219px; }
.c4 { width: 246px; }
.c5 { width: 158px; }
.c6 { width: 165px; }
.c7 { width: 314px; }
.table th {
  position: relative;
  height: 42px;
  padding: 1px 6px 0;
  text-align: left;
  font-weight: 700;
  border-left: 1px solid #dee2e6;
  border-right: 1px solid #dee2e6;
  border-bottom: 3px solid #dee2e6;
}
.table td {
  height: 49px;
  padding: 6px 6px 0;
  vertical-align: top;
  border: 1px solid #dee2e6;
  line-height: 28.8px;
}
.table tbody tr:nth-child(1) td,
.table tbody tr:nth-child(5) td,
.table tbody tr:nth-child(9) td { height: 50px; }
.table .center { text-align: center; }
.table tbody tr:nth-child(odd) { background: #f2f2f2; }
.table tbody tr.hover { background: #ececec; }
.sort::before, .sort::after {
  position: absolute;
  top: 11px;
  font-family: "DejaVu Sans", sans-serif;
  font-size: 18px;
  font-weight: 700;
  line-height: 20px;
  opacity: .3;
}
.sort::before { content: "\2191"; right: 16.5px; }
.sort::after { content: "\2193"; right: 7.5px; }
.table td.acts { padding: 5.500px 6px 0; white-space: nowrap; }

/* buttons */
.btn {
  display: inline-block;
  height: 37px;
  padding: 0 10px;
  border-radius: 3.6px;
  font-size: 15.4px;
  line-height: 36px;
  text-align: center;
}
.acts .btn { margin-right: 4px; }
.btn-primary { background: #007bff; color: #fff; }
.btn-info { background: #17a2b8; color: #fff; }
.btn-warning { background: #ffc107; color: #1f2d3d; }
.btn-danger { background: #dc3545; color: #fff; }

/* pagination (clipped by the viewport) */
.pager { display: flex; justify-content: flex-end; margin-top: 10px; padding-right: 1px; }
.page-item {
  height: 48px;
  padding: 9.6px 15px;
  background: #fff;
  border: 1px solid #dee2e6;
  color: #6c757d;
}
.page-prev { width: 99px; border-radius: 4.8px 0 0 4.8px; }
.page-on { width: 40px; background: #007bff; border-color: #007bff; color: #fff; }
.page-next { width: 65px; border-radius: 0 4.8px 4.8px 0; }

/* scrollbar */
.scrollbar {
  width: 24px;
  flex: none;
  display: flex;
  flex-direction: column;
  align-items: center;
  padding: 12px 0;
  background: #fdfdfd;
}
.sb-arrow { fill: #8c8c8c; flex: none; }
.sb-thumb { width: 13px; height: 670px; margin-top: 56px; background: #8c8c8c; border-radius: 7px; }
.sb-down { margin-top: auto; }

/* right rail */
.rail {
  width: 62px;
  flex: none;
  display: flex;
  flex-direction: column;
  align-items: center;
  padding: 2px 0 3px;
}
.rail-slot { height: 60.3px; width: 100%; flex: none; display: flex; align-items: center; justify-content: center; }
.rail-rule { width: 41px; height: 1px; margin-top: 16px; background: #c8c8c8; flex: none; }
.rail-plus { margin-top: 18px; }
.rail-low { margin-top: auto; }
.rail-rule-low { margin-top: 4px; margin-bottom: 3px; }

/* taskbar */
.taskbar {
  height: 72px;
  flex: none;
  display: flex;
  align-items: center;
  padding-left: 24px;
  background: #1c1c1c;
  border-top: 1px solid #3a3a3a;
  font-family: "Open Sans", sans-serif;
  color: #fff;
}
.weather { position: relative; width: 48px; height: 44px; display: flex; align-items: center; justify-content: center; flex: none; }
.weather-badge {
  position: absolute;
  left: 23px;
  top: -1px;
  width: 24px;
  height: 24px;
  border-radius: 50%;
  background: #c42b1c;
  color: #fff;
  font-size: 14px;
  line-height: 24px;
  text-align: center;
}
.start { width: 48px; margin-left: 259px; display: flex; justify-content: center; flex: none; }
.pill {
  width: 325px;
  height: 44px;
  margin-left: 16px;
  flex: none;
  display: flex;
  align-items: center;
  padding-left: 14px;
  background: #f3f3f3;
  border-radius: 22px;
}
.pill-text { margin-left: 16px; color: #5d5d5d; font-size: 20px; }
.hedgehog { margin-left: auto; margin-right: 2px; }
.apps { display: flex; height: 100%; margin-left: 6px; }
.app {
  position: relative;
  width: 66px;
  height: 100%;
  flex: none;
  display: flex;
  align-items: center;
  justify-content: center;
  padding-bottom: 1px;
}
.app-active::before {
  content: "";
  position: absolute;
  left: 4px;
  right: 4px;
  top: 5px;
  bottom: 5px;
  border-radius: 7px;
  background: #2c2c2c;
  box-shadow: 4px 0 0 #262626;
}
.app-active svg { position: relative; }
.dot {
  position: absolute;
  left: 29px;
  bottom: 6px;
  width: 9px;
  height: 5px;
  border-radius: 3px;
  background: #9a9a9a;
}
.dot-on { left: 22px; width: 24px; background: #4cc2ff; }
.wa-badge {
  position: absolute;
  left: 35px;
  top: 10px;
  width: 24px;
  height: 24px;
  border-radius: 50%;
  background: #4cc2ff;
  color: #111;
  font-size: 15px;
  line-height: 24px;
  text-align: center;
}
.teams-t { font-family: "Liberation Sans", sans-serif; font-size: 13px; fill: #4b53bc; text-anchor: middle; }
.pdf-t { font-family: "Liberation Sans", sans-serif; font-size: 8px; font-weight: 700; fill: #fff; text-anchor: middle; }

.tray { display: flex; align-items: center; height: 100%; margin-left: auto; padding-right: 13px; }
.tray-slot { width: 48px; display: flex; justify-content: center; flex: none; }
.tray-vol { width: 24px; }
.clock {
  width: 110px;
  flex: none;
  display: flex;
  flex-direction: column;
  align-items: flex-end;
  padding-right: 4px;
  font-size: 17.6px;
  line-height: 24px;
  margin-top: -2px;
}
.tray-bell { width: 38px; display: flex; justify-content: center; flex: none; }
.tray-pre { position: relative; width: 70px; height: 38px; display: flex; justify-content: center; flex: none; padding-top: 1px; }
.pre-tag {
  position: absolute;
  left: 27px;
  top: 22px;
  width: 27px;
  height: 14px;
  border-radius: 3px;
  background: #f7c01a;
  color: #111;
  font-size: 10px;
  font-weight: 700;
  line-height: 14px;
  letter-spacing: .5px;
  text-align: center;
}
```
